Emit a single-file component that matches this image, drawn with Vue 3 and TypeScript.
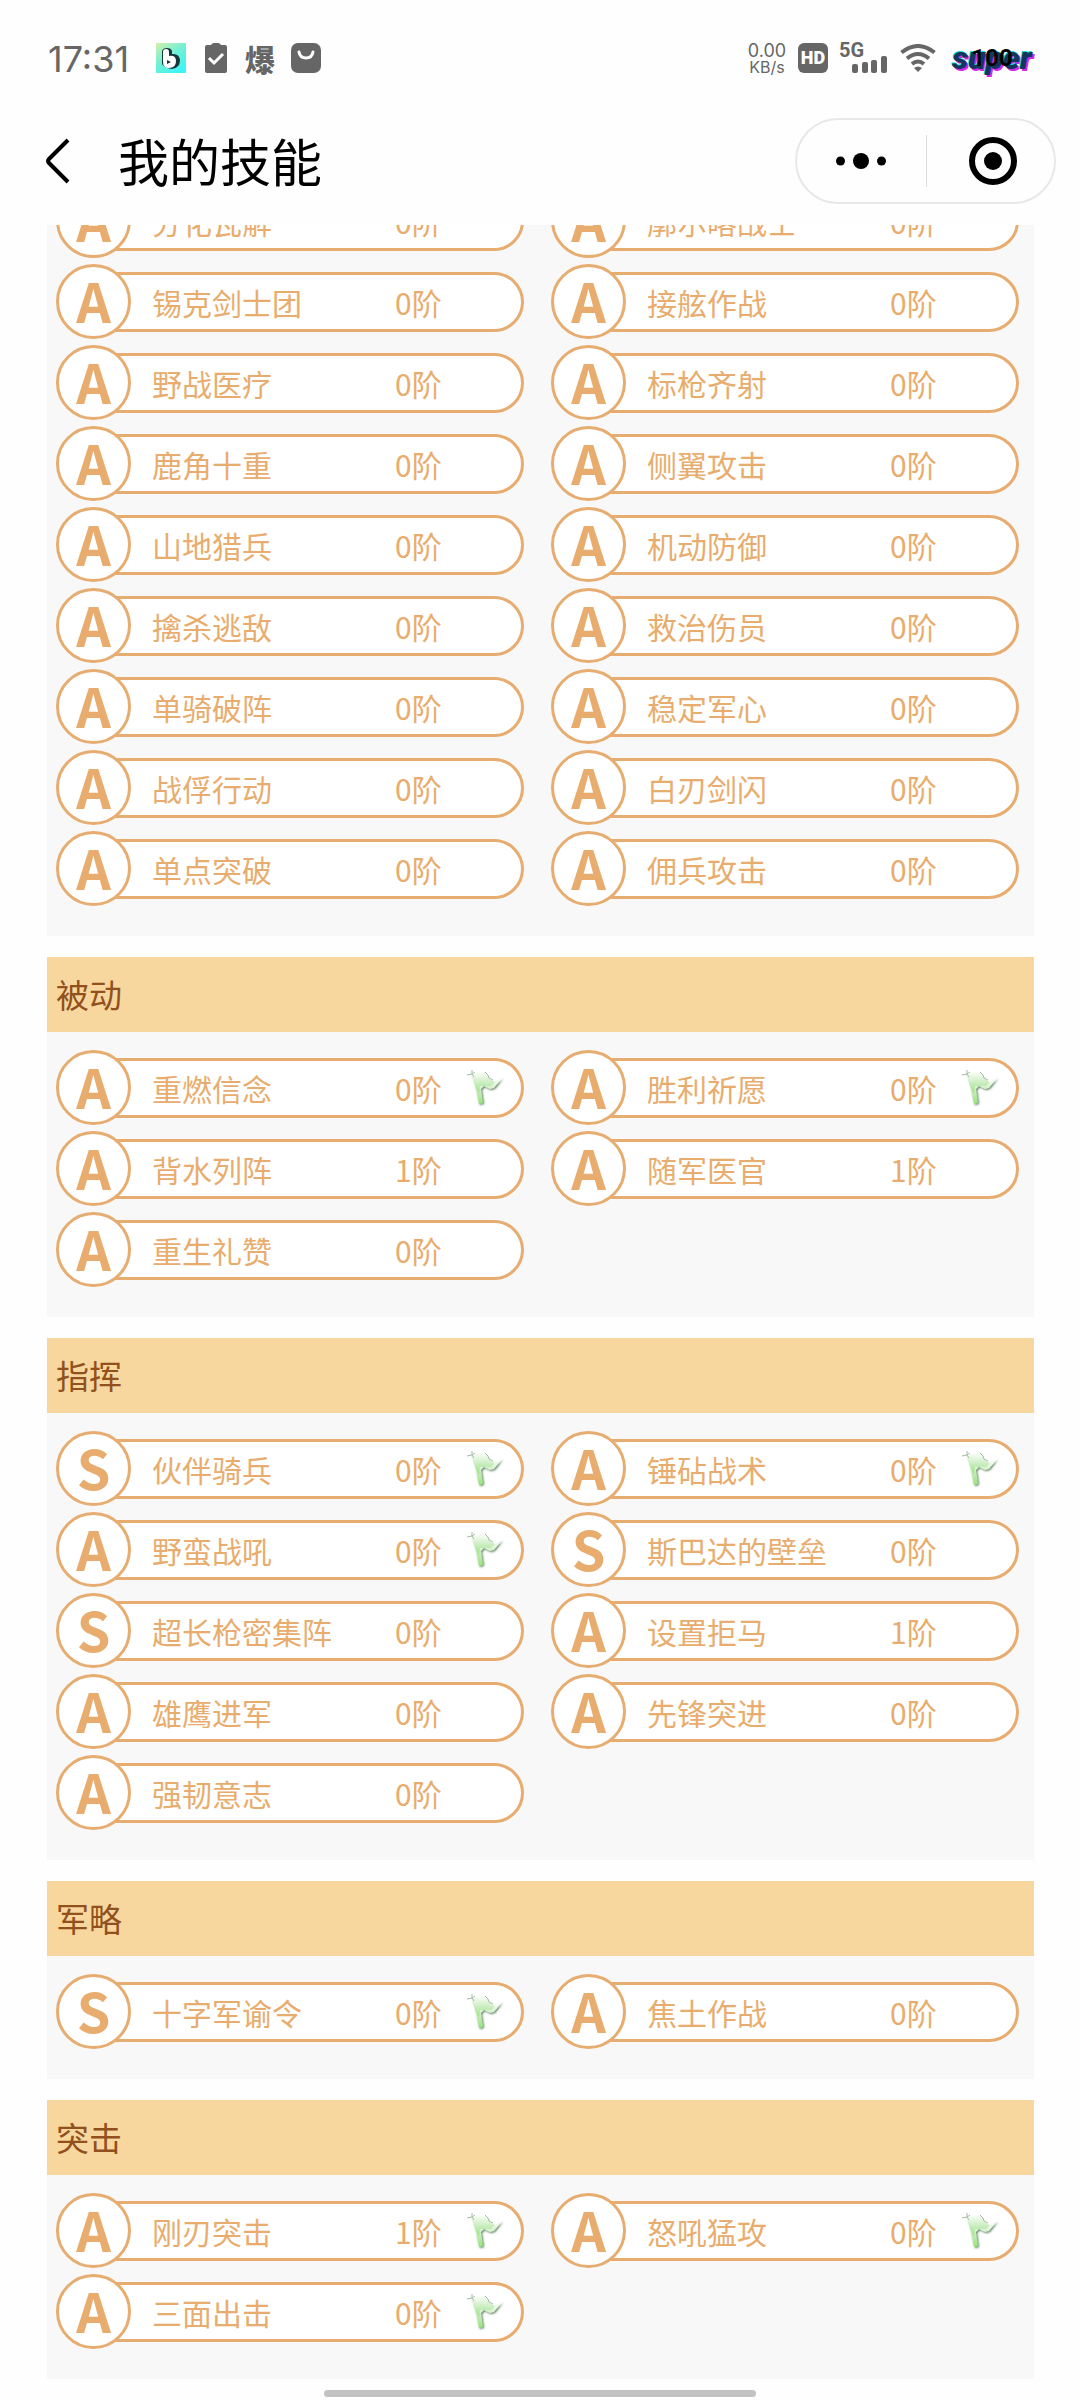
<script setup lang="ts">
interface Skill {
  grade: 'A' | 'S'
  name: string
  level: number
  flagged?: boolean
}

interface SkillGroup {
  title: string
  skills: Skill[]
}

const skill = (grade: 'A' | 'S', name: string, level = 0, flagged = false): Skill => ({
  grade,
  name,
  level,
  flagged,
})

const groups: SkillGroup[] = [
  {
    title: '',
    skills: [
      skill('A', '分化瓦解'),
      skill('A', '廓尔喀战士'),
      skill('A', '锡克剑士团'),
      skill('A', '接舷作战'),
      skill('A', '野战医疗'),
      skill('A', '标枪齐射'),
      skill('A', '鹿角十重'),
      skill('A', '侧翼攻击'),
      skill('A', '山地猎兵'),
      skill('A', '机动防御'),
      skill('A', '擒杀逃敌'),
      skill('A', '救治伤员'),
      skill('A', '单骑破阵'),
      skill('A', '稳定军心'),
      skill('A', '战俘行动'),
      skill('A', '白刃剑闪'),
      skill('A', '单点突破'),
      skill('A', '佣兵攻击'),
    ],
  },
  {
    title: '被动',
    skills: [
      skill('A', '重燃信念', 0, true),
      skill('A', '胜利祈愿', 0, true),
      skill('A', '背水列阵', 1),
      skill('A', '随军医官', 1),
      skill('A', '重生礼赞'),
    ],
  },
  {
    title: '指挥',
    skills: [
      skill('S', '伙伴骑兵', 0, true),
      skill('A', '锤砧战术', 0, true),
      skill('A', '野蛮战吼', 0, true),
      skill('S', '斯巴达的壁垒'),
      skill('S', '超长枪密集阵'),
      skill('A', '设置拒马', 1),
      skill('A', '雄鹰进军'),
      skill('A', '先锋突进'),
      skill('A', '强韧意志'),
    ],
  },
  {
    title: '军略',
    skills: [skill('S', '十字军谕令', 0, true), skill('A', '焦土作战')],
  },
  {
    title: '突击',
    skills: [
      skill('A', '刚刃突击', 1, true),
      skill('A', '怒吼猛攻', 0, true),
      skill('A', '三面出击', 0, true),
    ],
  },
]
</script>

<template>
  <div class="page">
    <svg class="defs" width="0" height="0" aria-hidden="true">
      <defs>
        <linearGradient id="flag-fill" x1="0" y1="0" x2="0" y2="1">
          <stop offset="0" stop-color="#fbfffa" />
          <stop offset="0.45" stop-color="#cfeec6" />
          <stop offset="1" stop-color="#94e478" />
        </linearGradient>
        <filter id="flag-shadow" x="-20%" y="-20%" width="150%" height="150%">
          <feDropShadow dx="1" dy="1" stdDeviation="1" flood-color="#3c6a40" flood-opacity="0.9" />
        </filter>
        <linearGradient id="app-fill" x1="0" y1="0" x2="0.7" y2="1">
          <stop offset="0" stop-color="#d4f0a8" />
          <stop offset="0.5" stop-color="#72f0d4" />
          <stop offset="1" stop-color="#3ef4f4" />
        </linearGradient>
      </defs>
    </svg>

    <header class="top">
      <div class="status">
        <div class="status-left">
          <time class="clock">17:31</time>
          <svg class="ic" width="30" height="30" viewBox="0 0 30 30">
            <rect width="30" height="30" fill="url(#app-fill)" />
            <path
              d="M6 8q1-3 5-3q4 0 5 3v3q7-1 8 6q0 8-8 9q-8-1-10-5z"
              fill="#17353a"
            />
            <path
              fill-rule="evenodd"
              d="M7 9q0-3 3-3t3 3v4q7-1 7 5q0 7-7 7q-6 0-6-6zM11 17v4l4-2z"
              fill="#fff"
            />
          </svg>
          <svg class="ic clip" width="22" height="30" viewBox="0 0 22 30">
            <path d="M2 2h4q1-2 3-2h4q2 0 3 2h4q2 0 2 2v24q0 2-2 2H2q-2 0-2-2V4q0-2 2-2z" fill="#666" />
            <path d="M4 15l5 5l9-9" fill="none" stroke="#fff" stroke-width="3" />
          </svg>
          <span class="hot">爆</span>
          <svg class="ic" width="30" height="30" viewBox="0 0 30 30">
            <rect width="30" height="30" rx="7" fill="#666" />
            <path d="M8 9q1 6 7 6t7-6" fill="none" stroke="#fff" stroke-width="3" stroke-linecap="round" />
          </svg>
        </div>
        <div class="status-right">
          <div class="speed"><span class="rate">0.00</span><span class="unit">KB/s</span></div>
          <span class="hd">HD</span>
          <div class="cell">
            <span class="net">5G</span>
            <svg class="bars" width="36" height="17" viewBox="0 0 36 17" fill="#666">
              <rect x="0" y="8" width="6" height="9" rx="2" />
              <rect x="10" y="6" width="6" height="11" rx="2" />
              <rect x="19" y="4" width="6" height="13" rx="2" />
              <rect x="29" y="0" width="6" height="17" rx="2" />
            </svg>
          </div>
          <svg class="wifi" width="36" height="28" viewBox="0 0 36 28" fill="none" stroke="#666" stroke-width="4">
            <path d="M1.500 8.500Q18-4.500 34.500 8.500" />
            <path d="M7 14.500Q18 5.500 29 14.500" />
            <path d="M12 20Q18 15 24 20" />
            <path d="M14 24q4-3 8 0l-4 4z" fill="#666" stroke="none" />
          </svg>
          <div class="battery"><span class="super">super</span><span class="charge">100</span></div>
        </div>
      </div>

      <div class="nav">
        <button class="back" type="button" aria-label="返回">
          <svg width="24" height="46" viewBox="0 0 24 46" fill="none" stroke="#000" stroke-width="4">
            <path d="M22 2L3 21Q1 23 3 25L22 44" />
          </svg>
        </button>
        <h1 class="title">我的技能</h1>
        <div class="capsule">
          <button class="cap-btn" type="button" aria-label="更多">
            <svg width="50" height="16" viewBox="0 0 50 16">
              <circle cx="4.500" cy="8" r="4.500" />
              <circle cx="25" cy="8" r="8" />
              <circle cx="45.500" cy="8" r="4.500" />
            </svg>
          </button>
          <button class="cap-btn close" type="button" aria-label="关闭">
            <svg width="48" height="48" viewBox="0 0 48 48">
              <circle cx="24" cy="24" r="21" fill="none" stroke="#000" stroke-width="6" />
              <circle cx="24" cy="24" r="9" />
            </svg>
          </button>
        </div>
      </div>
    </header>

    <main class="content">
      <section v-for="group in groups" :key="group.title" class="group">
        <h2 v-if="group.title" class="group-title">{{ group.title }}</h2>
        <ul class="grid" :class="{ scrolled: !group.title }">
          <li v-for="item in group.skills" :key="item.name" class="skill">
            <span class="grade">{{ item.grade }}</span>
            <div class="pill">
              <span class="name">{{ item.name }}</span>
              <span class="level">{{ item.level }}阶</span>
              <span class="flag">
                <svg v-if="item.flagged" width="40" height="40" viewBox="0 0 40 40">
                  <g filter="url(#flag-shadow)">
                    <path
                      d="M8 15L13 12L20 14L24 17L29 14L35 10L27 20L23 21L17 18L14 21L16 35L12 36Z"
                      fill="url(#flag-fill)"
                    />
                  </g>
                  <path
                    d="M4 7L12 4L20 5L23 11L28 14L24 18L13 18L12 26L8 18Z"
                    fill="url(#flag-fill)"
                  />
                  <path
                    d="M0 7l5-1l3-2M5 2v4l2 3M18 4l3 3l1 3l4 2"
                    fill="none"
                    stroke="#a3bba3"
                    stroke-width="1"
                  />
                </svg>
              </span>
            </div>
          </li>
        </ul>
      </section>
    </main>

    <footer class="home"><div class="home-bar"></div></footer>
  </div>
</template>

<style>
body {
  margin: 0;
  background: #fefefe;
}
</style>

<style scoped>
.page {
  display: flex;
  flex-direction: column;
  min-height: 100vh;
  background: #fefefe;
  font-family: "Noto Sans CJK SC", "Noto Sans", sans-serif;
}

.defs {
  position: absolute;
}

button {
  display: flex;
  align-items: center;
  justify-content: center;
  padding: 0;
  border: 0;
  background: none;
}

.top {
  height: 225px;
}

.status {
  display: flex;
  justify-content: space-between;
  align-items: center;
  height: 116px;
  padding: 0 48px;
  color: #666;
}

.status-left,
.status-right {
  display: flex;
  align-items: center;
}

.clock {
  width: 108px;
  padding-top: 2px;
  font: 36px/44px Inter, sans-serif;
}

.ic {
  display: block;
}

.clip {
  margin: 0 18px 0 19px;
}

.hot {
  width: 46px;
  font-size: 30px;
  line-height: 30px;
  font-weight: 900;
}

.speed {
  display: flex;
  flex-direction: column;
  align-items: center;
  width: 40px;
  margin-right: 11px;
  font-family: Inter, sans-serif;
}

.rate {
  font-size: 18px;
  line-height: 17px;
}

.unit {
  font-size: 16px;
  line-height: 16px;
}

.hd {
  width: 30px;
  margin-right: 11px;
  border-radius: 6px;
  background: #666;
  color: #fff;
  font: 900 18px/30px Roboto, sans-serif;
  text-align: center;
}

.cell {
  display: flex;
  flex-direction: column;
  width: 49px;
  height: 30px;
  margin-right: 12px;
}

.net {
  height: 13px;
  font: bold 20px/15px Roboto, sans-serif;
}

.bars {
  align-self: flex-end;
}

.wifi {
  margin-right: 16px;
}

.battery {
  display: grid;
  place-items: center;
  width: 80px;
  height: 40px;
}

.super,
.charge {
  grid-area: 1 / 1;
}

.super {
  color: #15365c;
  font: italic 900 32px/32px Roboto, sans-serif;
  text-shadow: -1px -1px 0 #19d8e0, 2px 2px 0 #d428e8;
}

.charge {
  color: #000;
  font: bold 24px/32px Roboto, sans-serif;
}

.nav {
  display: flex;
  align-items: center;
  height: 90px;
  padding: 0 24px 0 46px;
}

.back {
  margin-right: 48px;
}

.title {
  flex: 1;
  margin: 0;
  padding-bottom: 3px;
  font-size: 51px;
  line-height: 72px;
  font-weight: 400;
  color: #000;
}

.capsule {
  display: flex;
  align-items: center;
  box-sizing: border-box;
  width: 261px;
  height: 86px;
  border: 2px solid #e8e8e8;
  border-radius: 43px;
}

.cap-btn {
  box-sizing: border-box;
  width: 50%;
  height: 52px;
}

.close {
  padding-left: 6px;
  border-left: 1px solid #ddd;
}

.content {
  flex: 1;
  overflow: hidden;
  padding: 0 46px 0 47px;
}

.group {
  margin-bottom: 21px;
  background: #f8f8f8;
}

.group:last-child {
  margin-bottom: 0;
}

.group-title {
  margin: 0;
  padding: 0 9px;
  background: #f8d79e;
  color: #91501c;
  font-size: 33px;
  line-height: 75px;
  font-weight: 400;
}

.grid {
  display: grid;
  grid-template-columns: 1fr 1fr;
  gap: 6px 27px;
  margin: 0;
  padding: 18px 15px 30px 9px;
  list-style: none;
}

/* The first group is scrolled partly under the navigation bar. */
.scrolled {
  margin-top: -60px;
}

.skill {
  display: flex;
  align-items: center;
  height: 75px;
  color: #e8ad6e;
}

.grade {
  z-index: 1;
  box-sizing: border-box;
  flex: none;
  width: 75px;
  height: 75px;
  border: 3px solid #e6ac70;
  border-radius: 50%;
  background: #fff;
  font-size: 54px;
  line-height: 66px;
  font-weight: 700;
  text-align: center;
}

.pill {
  display: flex;
  align-items: center;
  box-sizing: border-box;
  flex: 1;
  height: 60px;
  margin-left: -45px;
  padding: 0 14px 0 63px;
  border: 3px solid #e6ac70;
  border-radius: 30px;
  background: #fff;
  font-size: 30px;
  line-height: 54px;
}

.name {
  flex: 1;
  white-space: nowrap;
}

.level {
  width: 72px;
}

.flag {
  display: flex;
  width: 40px;
}

.home {
  padding: 11px 0 3px;
}

.home-bar {
  width: 40%;
  height: 7px;
  margin: 0 auto;
  border-radius: 4px;
  background: #c2c2c2;
}
</style>
